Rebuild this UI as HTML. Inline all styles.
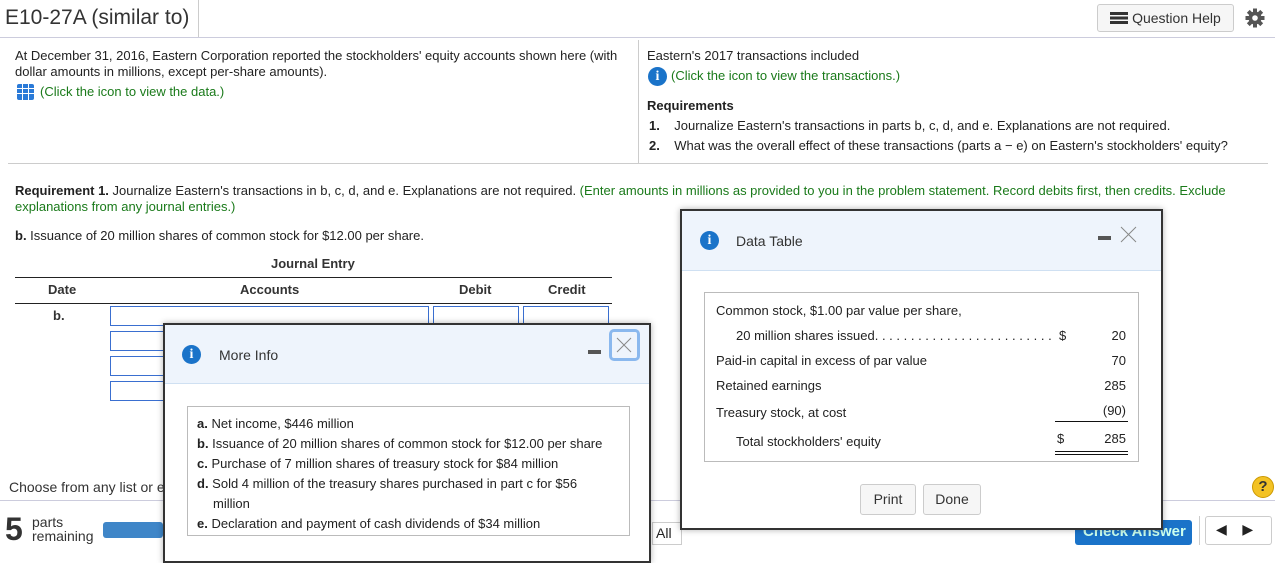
<!DOCTYPE html>
<html><head><meta charset="utf-8"><style>
*{box-sizing:border-box;margin:0;padding:0}
body{width:1275px;height:545px;overflow:hidden;background:#fff;font-family:"Liberation Sans",Arial,sans-serif;font-size:13px;color:#222;position:relative}
.a{position:absolute;white-space:nowrap}
.g{color:#1a7a1a}
.inp{position:absolute;border:1px solid #3a6fd0;background:#fff;height:20px}
.icon{position:absolute;width:19px;height:19px;border-radius:50%;background:#1a73c9;color:#fff;font:bold 14px "Liberation Serif",serif;text-align:center;line-height:19px}
.btn{position:absolute;border:1px solid #ccc;border-radius:3px;background:#f6f6f6;font-size:14px;text-align:center;color:#333}
</style></head><body>
<div class="a" style="left:5px;top:6px;font-size:21px;color:#333">E10-27A (similar to)</div>
<div class="a" style="left:198px;top:0;width:1px;height:37px;background:#ccc"></div>
<div class="a" style="left:0;top:37px;width:1275px;height:1px;background:#ccd"></div>
<div class="btn" style="left:1097px;top:4px;width:137px;height:28px;line-height:26px;font-size:14px"><span style="display:inline-block;width:18px;height:12px;vertical-align:-1px;background:repeating-linear-gradient(#333 0 3px,transparent 3px 4.5px)"></span> Question Help</div>
<svg class="a" style="left:1245px;top:8px" width="20" height="20" viewBox="0 0 20 20"><g fill="#555"><circle cx="10" cy="10" r="6.5"/><rect x="8" y="0.5" width="4" height="19"/><rect x="0.5" y="8" width="19" height="4"/><rect x="8" y="0.5" width="4" height="19" transform="rotate(45 10 10)"/><rect x="8" y="0.5" width="4" height="19" transform="rotate(-45 10 10)"/></g><circle cx="10" cy="10" r="2.8" fill="#fff"/></svg>

<div class="a" style="left:15px;top:48px;line-height:16px">At December 31, 2016, Eastern Corporation reported the stockholders' equity accounts shown here (with<br>dollar amounts in millions, except per-share amounts).</div>
<div class="a" style="left:17px;top:84px;width:17px;height:16px;background:#2a7ad8;border-radius:2px;background-image:linear-gradient(90deg,transparent 5px,#fff 5px 6px,transparent 6px 11px,#fff 11px 12px,transparent 12px),linear-gradient(transparent 4px,#fff 4px 5px,transparent 5px 9px,#fff 9px 10px,transparent 10px)"></div>
<div class="a g" style="left:40px;top:84px">(Click the icon to view the data.)</div>
<div class="a" style="left:638px;top:40px;width:1px;height:123px;background:#ccc"></div>
<div class="a" style="left:647px;top:48px">Eastern's 2017 transactions included</div>
<div class="icon" style="left:648px;top:67px">i</div>
<div class="a g" style="left:671px;top:68px">(Click the icon to view the transactions.)</div>
<div class="a" style="left:647px;top:98px;font-weight:bold">Requirements</div>
<div class="a" style="left:649px;top:118px"><b>1.</b>&nbsp;&nbsp;&nbsp; Journalize Eastern's transactions in parts b, c, d, and e. Explanations are not required.</div>
<div class="a" style="left:649px;top:138px"><b>2.</b>&nbsp;&nbsp;&nbsp; What was the overall effect of these transactions (parts a − e) on Eastern's stockholders' equity?</div>
<div class="a" style="left:8px;top:163px;width:1260px;height:1px;background:#ccc"></div>

<div class="a" style="left:15px;top:183px;line-height:16px"><b>Requirement 1.</b> Journalize Eastern's transactions in b, c, d, and e. Explanations are not required. <span class="g">(Enter amounts in millions as provided to you in the problem statement. Record debits first, then credits. Exclude<br>explanations from any journal entries.)</span></div>
<div class="a" style="left:15px;top:228px"><b>b.</b> Issuance of 20 million shares of common stock for $12.00 per share.</div>
<div class="a" style="left:271px;top:256px;font-weight:bold;color:#333">Journal Entry</div>
<div class="a" style="left:15px;top:277px;width:597px;height:1px;background:#222"></div>
<div class="a" style="left:48px;top:282px;font-weight:bold;color:#333">Date</div>
<div class="a" style="left:240px;top:282px;font-weight:bold;color:#333">Accounts</div>
<div class="a" style="left:459px;top:282px;font-weight:bold;color:#333">Debit</div>
<div class="a" style="left:548px;top:282px;font-weight:bold;color:#333">Credit</div>
<div class="a" style="left:15px;top:303px;width:597px;height:1px;background:#222"></div>
<div class="a" style="left:53px;top:308px;font-weight:bold;color:#333">b.</div>
<div class="inp" style="left:110px;top:306px;width:319px"></div>
<div class="inp" style="left:433px;top:306px;width:86px"></div>
<div class="inp" style="left:523px;top:306px;width:86px"></div>
<div class="inp" style="left:110px;top:331px;width:60px"></div>
<div class="inp" style="left:110px;top:356px;width:60px"></div>
<div class="inp" style="left:110px;top:381px;width:60px"></div>

<div class="a" style="left:9px;top:479px;font-size:14px;color:#333">Choose from any list or e</div>
<div class="a" style="left:0;top:500px;width:1275px;height:1px;background:#ccd"></div>
<div class="a" style="left:5px;top:511px;font:bold 32px 'Liberation Sans',sans-serif;color:#333">5</div>
<div class="a" style="left:32px;top:515px;font-size:14px;line-height:14px;color:#333">parts<br>remaining</div>
<div class="a" style="left:103px;top:522px;width:60px;height:16px;background:#3f86c8;border-radius:3px"></div>
<div class="a" style="left:652px;top:522px;width:30px;height:23px;border:1px solid #ccc;font-size:14px;padding:2px 3px">All</div>
<div class="a" style="left:1075px;top:520px;width:117px;height:25px;background:#1a73c9;border-radius:3px;color:#cfe;font-weight:bold;font-size:15px;padding:3px 0 0 8px">Check Answer</div>
<div class="a" style="left:1199px;top:516px;width:1px;height:29px;background:#ccc"></div>
<div class="a" style="left:1205px;top:516px;width:67px;height:29px;border:1px solid #ccc;border-radius:3px;font-size:14px;padding:4px 0 0 10px">◀&nbsp;&nbsp;&nbsp;&nbsp;▶</div>
<div class="a" style="left:1252px;top:476px;width:22px;height:22px;border-radius:50%;background:#f3c224;border:1px solid #c90;font-weight:bold;font-size:15px;text-align:center;line-height:20px;color:#333">?</div>

<!-- More Info modal -->
<div class="a" style="left:163px;top:323px;width:488px;height:240px;border:2px solid #333;background:#fff;box-shadow:0 0 6px rgba(0,0,0,.3)">
 <div style="position:absolute;left:0;top:0;width:100%;height:59px;background:#eef4fc;border-bottom:1px solid #cfe0f2"></div>
 <div class="icon" style="left:17px;top:20px">i</div>
 <div class="a" style="left:54px;top:22px;font-size:14px;color:#333">More Info</div>
 <div class="a" style="left:423px;top:25px;width:13px;height:4px;background:#555"></div>
 <div class="a" style="left:444px;top:4px;width:31px;height:32px;border:3px solid #8ab8ee;border-radius:5px"></div>
 <svg class="a" style="left:451px;top:12px" width="16" height="16"><path d="M1 1L15 15M15 1L1 15" stroke="#888" stroke-width="1"/></svg>
 <div class="a" style="left:22px;top:81px;width:443px;height:130px;border:1px solid #bbb"></div>
 <div class="a" style="left:32px;top:89px;line-height:20px">
  <b>a.</b> Net income, $446 million<br>
  <b>b.</b> Issuance of 20 million shares of common stock for $12.00 per share<br>
  <b>c.</b> Purchase of 7 million shares of treasury stock for $84 million<br>
  <b>d.</b> Sold 4 million of the treasury shares purchased in part c for $56<br><span style="padding-left:16px;display:inline-block;line-height:16px">million</span><br>
  <b>e.</b> Declaration and payment of cash dividends of $34 million
 </div>
</div>

<!-- Data Table modal -->
<div class="a" style="left:680px;top:209px;width:483px;height:321px;border:2px solid #333;background:#fff;box-shadow:0 0 6px rgba(0,0,0,.3)">
 <div style="position:absolute;left:0;top:0;width:100%;height:60px;background:#eef4fc;border-bottom:1px solid #cfe0f2"></div>
 <div class="icon" style="left:18px;top:20px">i</div>
 <div class="a" style="left:54px;top:22px;font-size:14px;color:#333">Data Table</div>
 <div class="a" style="left:416px;top:25px;width:13px;height:4px;background:#555"></div>
 <svg class="a" style="left:438px;top:15px" width="17" height="17"><path d="M1 1L16 16M16 1L1 16" stroke="#888" stroke-width="1"/></svg>
 <div class="a" style="left:22px;top:81px;width:435px;height:170px;border:1px solid #bbb"></div>
 <div class="a" style="left:34px;top:92px">Common stock, $1.00 par value per share,</div>
 <div class="a" style="left:54px;top:117px;width:320px;overflow:hidden">20 million shares issued. . . . . . . . . . . . . . . . . . . . . . . . . . . . . . .</div>
 <div class="a" style="left:377px;top:117px">$</div>
 <div class="a" style="left:34px;top:142px">Paid-in capital in excess of par value</div>
 <div class="a" style="left:34px;top:167px">Retained earnings</div>
 <div class="a" style="left:34px;top:194px">Treasury stock, at cost</div>
 <div class="a" style="left:54px;top:223px">Total stockholders' equity</div>
 <div class="a" style="left:375px;top:220px">$</div>
 <div class="a" style="left:398px;top:117px;width:46px;text-align:right">20</div>
 <div class="a" style="left:398px;top:142px;width:46px;text-align:right">70</div>
 <div class="a" style="left:398px;top:167px;width:46px;text-align:right">285</div>
 <div class="a" style="left:398px;top:192px;width:46px;text-align:right">(90)</div>
 <div class="a" style="left:398px;top:220px;width:46px;text-align:right">285</div>
 <div class="a" style="left:373px;top:210px;width:73px;height:1px;background:#111"></div>
 <div class="a" style="left:373px;top:240px;width:73px;height:4px;border-top:1px solid #111;border-bottom:1px solid #111"></div>
 <div class="btn" style="left:178px;top:273px;width:56px;height:31px;line-height:29px">Print</div>
 <div class="btn" style="left:241px;top:273px;width:58px;height:31px;line-height:29px">Done</div>
</div>
</body></html>
